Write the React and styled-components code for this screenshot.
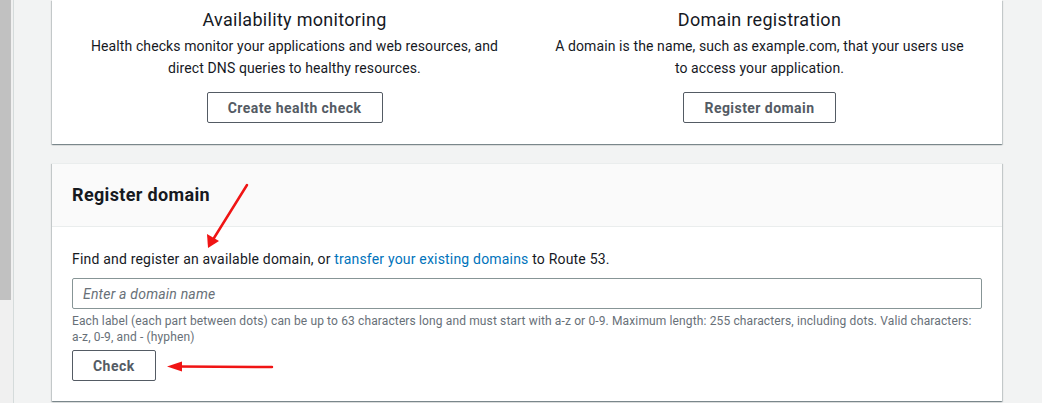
import React from "react";
import styled, { createGlobalStyle } from "styled-components";

const GlobalStyle = createGlobalStyle`
  html, body {
    margin: 0;
    padding: 0;
    background-color: #f2f3f3;
    font-family: Roboto, "Noto Sans", Arial, sans-serif;
    color: #16191f;
  }
  * {
    box-sizing: border-box;
  }
`;

const Page = styled.div`
  position: relative;
  display: flex;
  width: 1042px;
  height: 403px;
  overflow: hidden;
`;

const ScrollTrack = styled.div`
  width: 14px;
  flex-shrink: 0;
  background-color: #f0f0f0;
  border-right: 1px solid #d5dbdb;
`;

const ScrollThumb = styled.div`
  width: 11px;
  height: 300px;
  background-color: #c1c1c1;
`;

const Content = styled.div`
  display: flex;
  flex-direction: column;
  gap: 19px;
  padding-left: 38px;
  width: 988px;
`;

const Card = styled.section`
  width: 950px;
  background-color: #ffffff;
  border-top: ${(p) => (p.$clipped ? "none" : "1px solid #eaeded")};
  box-shadow: 0 1px 1px 0 rgba(0, 28, 36, 0.3),
    1px 1px 1px 0 rgba(0, 28, 36, 0.15), -1px 1px 1px 0 rgba(0, 28, 36, 0.15);
`;

const FeatureGrid = styled.div`
  display: grid;
  grid-template-columns: 1fr 1fr;
  gap: 20px;
  padding: 8px 20px 21px;
`;

const Feature = styled.div`
  display: flex;
  flex-direction: column;
  align-items: center;
  text-align: center;
`;

const FeatureTitle = styled.h2`
  margin: 0 0 3px;
  font-size: 18px;
  line-height: 24px;
  font-weight: 400;
  letter-spacing: 0.3px;
`;

const FeatureText = styled.p`
  margin: 0 0 13px;
  font-size: 14px;
  line-height: 22px;
  letter-spacing: 0.1px;
`;

const Button = styled.button`
  height: 31px;
  padding: 0 20px;
  background-color: #ffffff;
  border: 1px solid #545b64;
  border-radius: 2px;
  color: #545b64;
  font-family: inherit;
  font-size: 14px;
  font-weight: 700;
  letter-spacing: 0.45px;
  min-width: ${(p) => p.$minWidth || "auto"};
  cursor: pointer;
`;

const CardHeader = styled.div`
  background-color: #fafafa;
  border-bottom: 1px solid #eaeded;
  padding: 19px 20px 19px;
`;

const CardTitle = styled.h2`
  margin: 0;
  font-size: 18px;
  line-height: 24px;
  font-weight: 700;
  letter-spacing: 0.35px;
`;

const CardBody = styled.div`
  display: flex;
  flex-direction: column;
  align-items: flex-start;
  padding: 21px 20px 20px;
`;

const Intro = styled.p`
  margin: 0 0 8px;
  font-size: 14px;
  line-height: 22px;
  letter-spacing: 0.19px;
`;

const Link = styled.a`
  color: #0073bb;
  text-decoration: none;
`;

const DomainInput = styled.input`
  width: 100%;
  height: 31px;
  padding: 0 10px;
  border: 1px solid #879596;
  border-radius: 2px;
  font-family: inherit;
  font-size: 14px;
  letter-spacing: 0.2px;
  color: #16191f;

  &::placeholder {
    color: #687078;
    font-style: italic;
  }
`;

const Hint = styled.p`
  margin: 4px 0 5px;
  font-size: 12px;
  line-height: 16px;
  letter-spacing: 0.13px;
  color: #687078;
`;

const Annotations = styled.svg`
  position: absolute;
  left: 0;
  top: 0;
  pointer-events: none;
`;

export default function App() {
  return (
    <>
      <GlobalStyle />
      <Page>
        <ScrollTrack>
          <ScrollThumb />
        </ScrollTrack>
        <Content>
          <Card $clipped>
            <FeatureGrid>
              <Feature>
                <FeatureTitle>Availability monitoring</FeatureTitle>
                <FeatureText>
                  Health checks monitor your applications and web resources, and
                  <br />
                  direct DNS queries to healthy resources.
                </FeatureText>
                <Button $minWidth="176px">Create health check</Button>
              </Feature>
              <Feature>
                <FeatureTitle>Domain registration</FeatureTitle>
                <FeatureText>
                  A domain is the name, such as example.com, that your users use
                  <br />
                  to access your application.
                </FeatureText>
                <Button $minWidth="152px">Register domain</Button>
              </Feature>
            </FeatureGrid>
          </Card>

          <Card>
            <CardHeader>
              <CardTitle>Register domain</CardTitle>
            </CardHeader>
            <CardBody>
              <Intro>
                Find and register an available domain, or{" "}
                <Link href="#">transfer your existing domains</Link> to Route 53.
              </Intro>
              <DomainInput placeholder="Enter a domain name" />
              <Hint>
                Each label (each part between dots) can be up to 63 characters
                long and must start with a-z or 0-9. Maximum length: 255
                characters, including dots. Valid characters: a-z, 0-9, and -
                (hyphen)
              </Hint>
              <Button $minWidth="82px">Check</Button>
            </CardBody>
          </Card>
        </Content>

        <Annotations width="1042" height="403" viewBox="0 0 1042 403">
          <line x1="247" y1="185" x2="214" y2="238" stroke="#f01414" strokeWidth="2.5" strokeLinecap="round" />
          <polygon points="208,248 207,234 219,241" fill="#f01414" />
          <line x1="272" y1="367" x2="178" y2="366.5" stroke="#f01414" strokeWidth="2.5" strokeLinecap="round" />
          <polygon points="167,366.5 182,361.5 182,371.5" fill="#f01414" />
        </Annotations>
      </Page>
    </>
  );
}
